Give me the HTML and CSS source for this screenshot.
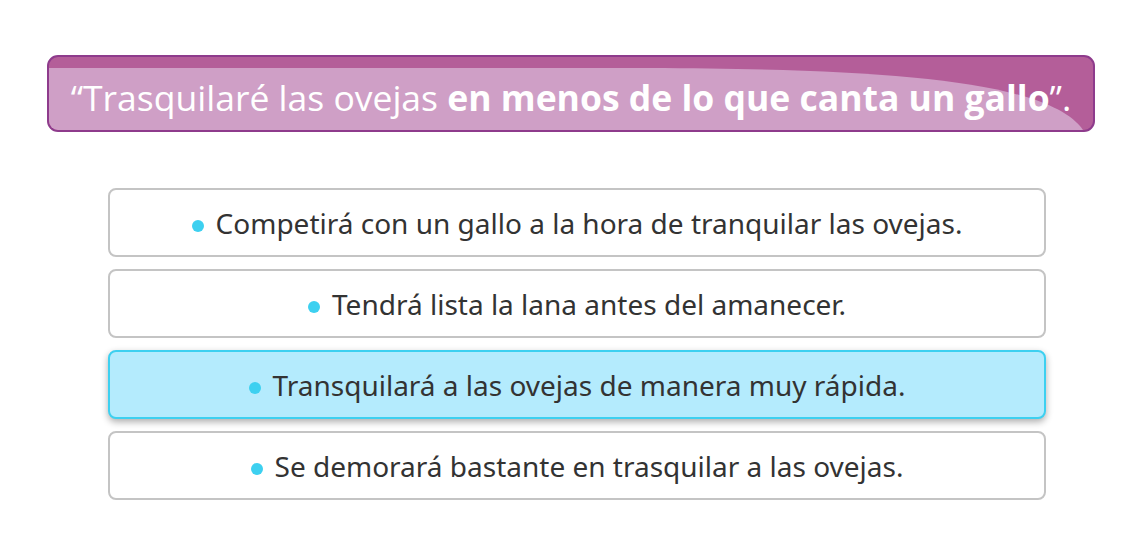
FILE: index.html
```html
<!DOCTYPE html>
<html lang="es">
<head>
<meta charset="utf-8">
<link rel="stylesheet" href="styles.css">
</head>
<body>
<main class="page">
  <header class="banner">
    <svg class="banner-bg" viewBox="0 0 1044 73" preserveAspectRatio="none" aria-hidden="true">
      <path d="M0,11 L600,11 C850,12 1000,25 1034,73 L0,73 Z" fill="#cf9fc6"/>
    </svg>
    <h1 class="banner-title">“Trasquilaré las ovejas <strong>en menos de lo que canta un gallo</strong>”.</h1>
  </header>
  <ul class="options">
    <li class="option"><span class="dot"></span>Competirá con un gallo a la hora de tranquilar las ovejas.</li>
    <li class="option"><span class="dot"></span>Tendrá lista la lana antes del amanecer.</li>
    <li class="option option-selected"><span class="dot"></span>Transquilará a las ovejas de manera muy rápida.</li>
    <li class="option"><span class="dot"></span>Se demorará bastante en trasquilar a las ovejas.</li>
  </ul>
</main>
</body>
</html>
```
FILE: styles.css
```css
html, body {
  margin: 0;
  padding: 0;
  background: #ffffff;
}
.page {
  padding: 55px 0 0 47px;
  width: 1048px;
}
.banner {
  position: relative;
  height: 73px;
  border: 2px solid #8e3b8c;
  border-radius: 11px;
  background: #b45e99;
  overflow: hidden;
  display: flex;
  align-items: center;
  justify-content: center;
}
.banner-bg {
  position: absolute;
  left: 0;
  top: 0;
  width: 100%;
  height: 100%;
}
.banner-title {
  position: relative;
  margin: 0;
  padding-top: 6px;
  font-family: "Open Sans", sans-serif;
  font-weight: 400;
  font-size: 35.5px;
  color: #ffffff;
  white-space: nowrap;
}
.banner-title strong {
  font-weight: 700;
}
.options {
  list-style: none;
  margin: 56px 0 0 61px;
  padding: 0;
  width: 938px;
  display: flex;
  flex-direction: column;
  gap: 12px;
}
.option {
  box-sizing: border-box;
  height: 69px;
  border: 2px solid #c4c4c4;
  border-radius: 8px;
  background: #ffffff;
  display: flex;
  align-items: center;
  justify-content: center;
  font-family: "Noto Sans", sans-serif;
  font-size: 28px;
  color: #333333;
}
.option-selected {
  background: #b4ebfd;
  border-color: #3dd0f0;
  box-shadow: 0 3px 7px rgba(0, 0, 0, 0.32);
}
.dot {
  width: 12px;
  height: 12px;
  border-radius: 50%;
  background: #3dd0f0;
  margin-right: 12px;
  margin-top: 6px;
  flex-shrink: 0;
}
```
